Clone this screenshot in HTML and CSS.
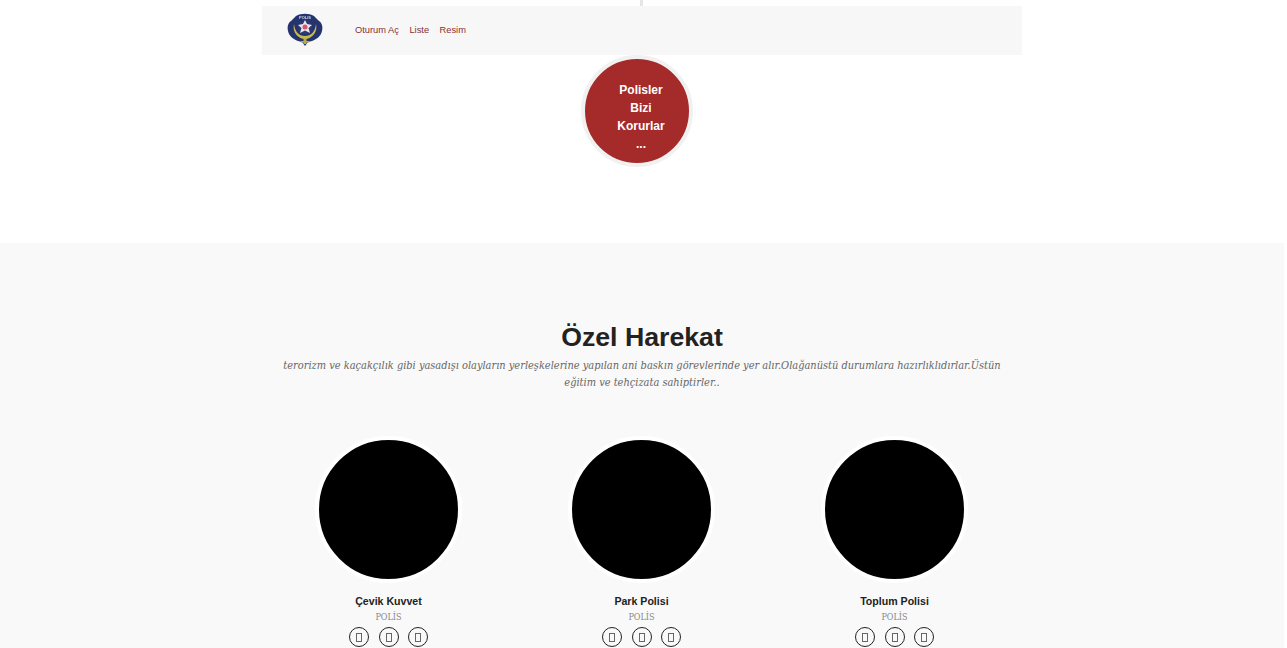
FILE: index.html
```html
<!DOCTYPE html>
<html>
<head>
  <title>Polis</title>
  <link rel="stylesheet" href="styles.css">
</head>
<body>

  <div class="top">
    <div class="line"></div>
    <div class="nav">
      <a class="logo" href="#">
        <svg width="38" height="34" viewBox="0 0 38 34">
          <path d="M10 3 C15 0 23 0 28 3 L33 8 C36 10 37 14 36 18 C35 23 31 26 26 28 L22 29 L19 33 L16 29 L12 28 C7 26 3 23 2 18 C1 14 2 10 5 8 Z" fill="#25346e"/>
          <path d="M8 11 C6 19 12 26 19 26 C26 26 32 19 30 11 C29 19 25 23 19 23 C13 23 9 19 8 11 Z" fill="#c8b94c"/>
          <circle cx="19" cy="14" r="7" fill="#2c3a78"/>
          <path d="M19 7 L21 11 L26 12 L22.5 15 L24 20 L19 17.5 L14 20 L15.5 15 L12 12 L17 11 Z" fill="#ece6ea"/>
          <circle cx="19" cy="14" r="2.5" fill="#d2596b"/>
          <path d="M17.5 26 H20.5 V31 H17.5 Z M15 28 H23 V29.5 H15 Z" fill="#b5ad4e"/>
          <text class="logo-text" x="19" y="6" text-anchor="middle">POLİS</text>
        </svg>
      </a>
      <ul class="menu">
        <li><a href="#">Oturum Aç</a></li>
        <li><a href="#">Liste</a></li>
        <li><a href="#">Resim</a></li>
      </ul>
    </div>
    <div class="hero">
      <div class="badge">Polisler Bizi Korurlar ...</div>
    </div>
  </div>

  <div class="team">
    <h2>Özel Harekat</h2>
    <p class="intro">terorizm ve kaçakçılık gibi yasadışı olayların yerleşkelerine yapılan ani baskın görevlerinde yer alır.Olağanüstü durumlara hazırlıklıdırlar.Üstün eğitim ve tehçizata sahiptirler..</p>

    <div class="members">
      <div class="member">
        <div class="photo"></div>
        <h4>Çevik Kuvvet</h4>
        <span class="role">POLİS</span>
        <div class="social">
          <a href="#"><i></i></a>
          <a href="#"><i></i></a>
          <a href="#"><i></i></a>
        </div>
      </div>
      <div class="member">
        <div class="photo"></div>
        <h4>Park Polisi</h4>
        <span class="role">POLİS</span>
        <div class="social">
          <a href="#"><i></i></a>
          <a href="#"><i></i></a>
          <a href="#"><i></i></a>
        </div>
      </div>
      <div class="member">
        <div class="photo"></div>
        <h4>Toplum Polisi</h4>
        <span class="role">POLİS</span>
        <div class="social">
          <a href="#"><i></i></a>
          <a href="#"><i></i></a>
          <a href="#"><i></i></a>
        </div>
      </div>
    </div>
  </div>

</body>
</html>
```

FILE: styles.css
```css
html, body {
  height: 648px;
  overflow: hidden;
}
body {
  margin: 0;
  padding-right: 3px;
  font-family: "Liberation Sans", Arial, sans-serif;
  background-color: #fff;
}
.top {
  height: 243px;
}
.line {
  width: 3px;
  height: 6px;
  margin-left: 640px;
  background-color: #e6e6e6;
}
.nav {
  display: flex;
  align-items: center;
  width: 760px;
  height: 49px;
  margin: 0 auto;
  background-color: #f7f7f7;
}
.logo {
  display: flex;
  margin: -2px 0 0 24px;
  filter: blur(0.4px);
}
.logo-text {
  font-size: 4px;
  font-weight: bold;
  fill: #d5d8e8;
}
.menu {
  display: flex;
  gap: 10.5px;
  margin: -5px 0 0 31px;
  padding: 0;
  list-style: none;
}
.menu a {
  font-size: 9.3px;
  color: #8a2f2f;
  text-decoration: none;
}
.hero {
  display: flex;
  justify-content: center;
  padding-right: 10px;
}
.badge {
  display: flex;
  align-items: center;
  justify-content: center;
  box-sizing: border-box;
  width: 112px;
  height: 112px;
  padding: 12px 20px 0 28px;
  border: 4px solid #f1f1f1;
  border-radius: 50%;
  background-color: #a52a2a;
  color: #fff;
  font-size: 12px;
  font-weight: bold;
  line-height: 18px;
  text-align: center;
}
.team {
  height: 405px;
  overflow: hidden;
  padding-top: 76px;
  box-sizing: border-box;
  background-color: #f9f9f9;
  text-align: center;
}
.team h2 {
  margin: 0;
  font-size: 26.7px;
  line-height: 36px;
  color: #222;
}
.intro {
  width: 730px;
  margin: 2px auto 0;
  font-family: "DejaVu Serif Condensed", "DejaVu Serif", serif;
  font-size: 10.95px;
  font-style: italic;
  line-height: 17px;
  color: #666;
}
.members {
  display: grid;
  grid-template-columns: repeat(3, 1fr);
  box-sizing: border-box;
  width: 760px;
  margin: 45px auto 0;
  padding-right: 1px;
}
.photo {
  box-sizing: border-box;
  width: 147px;
  height: 147px;
  margin: 0 auto;
  border: 4px solid #fff;
  border-radius: 50%;
  background-color: #000;
}
.member h4 {
  margin: 10px 0 0;
  font-size: 10.6px;
  line-height: 16px;
  color: #222;
}
.role {
  display: block;
  margin-top: 1px;
  font-family: "DejaVu Serif Condensed", "DejaVu Serif", serif;
  font-size: 9px;
  line-height: 14px;
  color: #888;
}
.social {
  display: flex;
  justify-content: center;
  gap: 9.5px;
  margin-top: 3px;
}
.social a {
  display: flex;
  align-items: center;
  justify-content: center;
  box-sizing: border-box;
  width: 20px;
  height: 20px;
  border: 1px solid #222;
  border-radius: 50%;
}
.social i {
  display: block;
  box-sizing: border-box;
  width: 6px;
  height: 9px;
  border: 1px solid #666;
}
```
